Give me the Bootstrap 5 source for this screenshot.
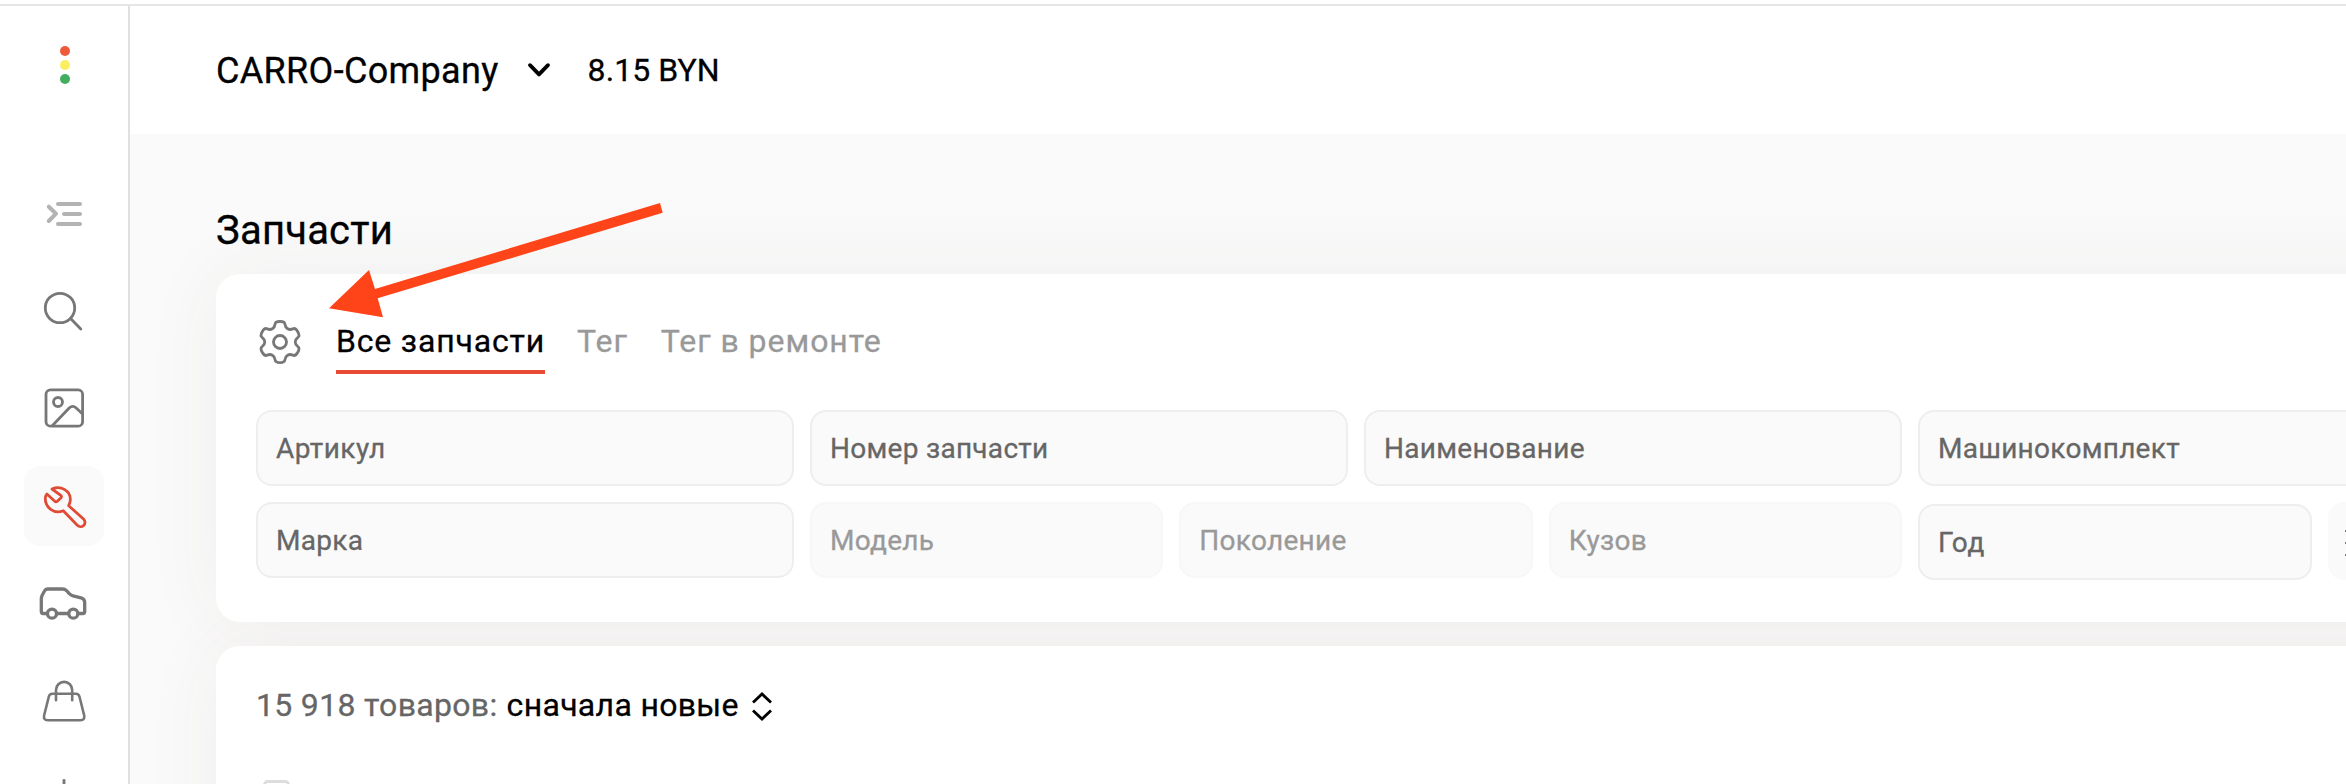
<!DOCTYPE html>
<html lang="ru">
<head>
<meta charset="utf-8">
<title>Запчасти</title>
<link href="https://cdn.jsdelivr.net/npm/bootstrap@5.3.0/dist/css/bootstrap.min.css" rel="stylesheet">
<style>
body{font-family:Roboto,"Liberation Sans",sans-serif;color:#000;background:#fff;height:784px;overflow:hidden;-webkit-text-stroke:.3px}
.app-shell{height:780px;border-top:2px solid #e6e6e6}
.side-menu{width:130px;border-right:2px solid #e0e0e0;padding:0 24px}
.side-menu svg{display:block;width:80px;height:80px;fill:none;stroke:#777;stroke-width:2.8;stroke-linecap:round;stroke-linejoin:round}
.side-logo{height:166px;padding-top:40px}
.side-logo span{width:10px;height:10px;border-radius:50%;margin-left:1px}
.side-items{gap:18px}
.side-items a{border-radius:16px}
.side-items a.active{background:#fafafa}
.side-items a.active svg{stroke:#e04b35}
.main-area{background:#fafafa;isolation:isolate;min-width:0}
.top-bar{height:128px;padding-left:86px;background:#fff}
.company{font-size:36px;line-height:40px;letter-spacing:.33px;position:relative;top:1px}
.balance{font-size:32px;line-height:40px;letter-spacing:.1px}
.page-body{padding-left:86px;width:2366px}
.page-title{font-size:40px;line-height:48px;font-weight:400;letter-spacing:.2px;margin:0;padding-top:73px;height:140px}
.panel{width:2280px;border-radius:24px;background:#fff;padding:0 40px;position:relative}
.panel::before{content:"";position:absolute;inset:0;z-index:-1;border-radius:24px;box-shadow:0 0 80px rgba(100,65,45,.06)}
.filters{height:348px}
.results{margin-top:24px;height:300px}
.tabs{padding-top:44px;height:136px}
.tab-link{font-size:32px;line-height:46px;letter-spacing:.95px;color:#999;text-decoration:none;height:56px}
.tab-link.active{color:#000;letter-spacing:.82px;border-bottom:4px solid #e84a33}
.filter-grid{display:grid;grid-template-columns:repeat(4,538px);gap:16px}
.field{height:76px;border:2px solid #eee;border-radius:16px;background:#fafafa;color:#666;font-size:28px;letter-spacing:.28px;line-height:74px;padding-left:18px}
.field.off{color:#999;border-color:#f7f7f7}
.year-field{width:394px;position:relative;top:2px;letter-spacing:.8px}
.more-btn{width:128px;height:78px;border-radius:16px;background:#fafafa;padding:27px 0 0 16px}
.sort-row{padding-top:37px;font-size:32px;line-height:44px;letter-spacing:.32px}
.check{width:27px;height:27px;border:3px solid #ddd;border-radius:5px;margin:53px 0 0 7px}
.pointer-arrow{position:absolute;left:329px;top:200px;z-index:3}
</style>
</head>
<body class="pt-1">
<div class="app-shell d-flex overflow-hidden">
  <nav class="side-menu flex-shrink-0">
    <div class="side-logo d-flex flex-column align-items-center gap-1">
      <span style="background:#ee5a3a"></span><span style="background:#faef62"></span><span style="background:#43ae5e"></span>
    </div>
    <div class="side-items d-flex flex-column">
      <a><svg viewBox="0 0 80 80" style="stroke:#b3b3b3;stroke-width:4"><path d="M24.8 34.7l7.2 7-7.2 7.3M34 32h22M40 42h16M34 52h22"/></svg></a>
      <a><svg viewBox="0 0 80 80"><circle cx="36" cy="38" r="14.7"/><path d="M46.6 48.6L56.8 59"/></svg></a>
      <a><svg viewBox="0 0 80 80"><rect x="22" y="21.8" width="36.6" height="36.4" rx="4.5"/><circle cx="34" cy="34" r="4.5"/><path d="M28.5 57.5L45.2 40Q48.7 36.7 52.2 40L58.6 46"/></svg></a>
      <a class="active"><svg viewBox="0 0 80 80"><path d="M28 23C37 19 46.8 25 46.3 34C46.3 36 45.5 38 44.7 39.7L59.5 53C64 57.5 57.5 63.5 53.3 59.3L39.3 44.7C30 48.5 21 41.5 21.3 32C21.5 30.5 22 29 22.9 28L30.5 35Q31.8 36.3 33.3 35.3L37 31.8Q38 30.5 36.8 29.3Z"/></svg></a>
      <a><svg viewBox="0 0 80 80" style="stroke-width:3.3"><path d="M23.3 49.5H19.3Q17.3 49.5 17.3 47.5V35Q17.3 33 18.2 31.2L20.6 26.8Q21.5 25 23.5 25H38.5Q41 25 42.8 26.8L45 29.4Q46.7 31.2 49 31.8L57 33.8Q60.7 35 60.7 38.5V47.5Q60.7 49.5 58.7 49.5H54M44.6 49.5H32.7"/><circle cx="28" cy="49.7" r="4.5"/><circle cx="49.3" cy="49.7" r="4.5"/></svg></a>
      <a><svg viewBox="0 0 80 80" style="stroke-width:2.6"><path d="M28.5 31.8H51.8Q54.8 31.8 55.5 34.7L60.2 53.5Q61 58.2 56.6 58.2H23.6Q19.2 58.2 20.1 53.5L24.8 34.7Q25.5 31.8 28.5 31.8ZM32 38.2V28A8.1 8.1 0 0 1 48.2 28V38.2"/></svg></a>
      <a><svg viewBox="0 0 80 80"><path d="M40 20.3V40"/></svg></a>
    </div>
  </nav>
  <main class="main-area flex-grow-1 overflow-hidden">
    <header class="top-bar d-flex align-items-center">
      <span class="company">CARRO-Company</span>
      <svg style="margin:0 37px 0 28px" width="24" height="16" viewBox="0 0 24 16" fill="none" stroke="#000" stroke-width="3.8" stroke-linecap="round" stroke-linejoin="round"><path d="M3 3.2L12 12.4L21 3.2"/></svg>
      <span class="balance">8.15 BYN</span>
    </header>
    <div class="page-body">
      <h1 class="page-title">Запчасти</h1>
      <section class="panel filters">
        <div class="tabs d-flex">
          <svg class="flex-shrink-0" style="margin-right:32px" width="48" height="48" viewBox="-24 -24 48 48" fill="none" stroke="#777" stroke-width="2.8"><path d="M-5 -17.5Q-4.8 -20.6 0 -20.6Q4.8 -20.6 5 -17.5C5.5 -13.5 8.9 -11.5 12.7 -13.1Q15.4 -14.5 17.8 -10.3Q20.2 -6.1 17.7 -4.4C14.4 -2 14.4 2 17.7 4.4Q20.2 6.1 17.8 10.3Q15.4 14.5 12.7 13.1C8.9 11.5 5.5 13.5 5 17.5Q4.8 20.6 0 20.6Q-4.8 20.6 -5 17.5C-5.5 13.5 -8.9 11.5 -12.7 13.1Q-15.4 14.5 -17.8 10.3Q-20.2 6.1 -17.7 4.4C-14.4 2 -14.4 -2 -17.7 -4.4Q-20.2 -6.1 -17.8 -10.3Q-15.4 -14.5 -12.7 -13.1C-8.9 -11.5 -5.5 -13.5 -5 -17.5Z"/><circle r="6.5"/></svg>
          <a class="tab-link active">Все запчасти</a><a class="tab-link" style="margin-left:32px">Тег</a><a class="tab-link" style="margin-left:33px">Тег в ремонте</a>
        </div>
        <div class="filter-grid">
          <div class="field" style="letter-spacing:.45px">Артикул</div>
          <div class="field">Номер запчасти</div>
          <div class="field">Наименование</div>
          <div class="field">Машинокомплект</div>
          <div class="field">Марка</div>
          <div class="d-flex gap-3" style="grid-column:span 2">
            <div class="field off flex-fill w-100">Модель</div>
            <div class="field off flex-fill w-100">Поколение</div>
            <div class="field off flex-fill w-100">Кузов</div>
          </div>
          <div class="d-flex gap-3">
            <div class="field year-field">Год</div>
            <div class="more-btn"><svg class="d-block" width="32" height="28" viewBox="0 0 32 28" stroke="#777" stroke-width="2"><path d="M1 2h30M1 14h30M1 26h30"/></svg></div>
          </div>
        </div>
      </section>
      <section class="panel results">
        <div class="sort-row d-flex">
          <span style="color:#666">15 918 товаров:</span>
          <span style="margin-left:9px">сначала новые</span>
          <svg style="margin:8px 0 0 12px" width="22" height="30" viewBox="0 0 22 30" fill="none" stroke="#000" stroke-width="2.8"><path d="M2 11.5L11 3L20 11.5M2 19.5L11 28L20 19.5"/></svg>
        </div>
        <div class="check"></div>
      </section>
    </div>
  </main>
</div>
<svg class="pointer-arrow" width="336" height="120" viewBox="329 200 336 120"><path fill="#ff4419" d="M329 308.3L369 270L375 289L660 203L662.7 212.7L377.7 298.3L383 317.3Z"/></svg>
<script src="https://cdn.jsdelivr.net/npm/bootstrap@5.3.0/dist/js/bootstrap.bundle.min.js"></script>
</body>
</html>
